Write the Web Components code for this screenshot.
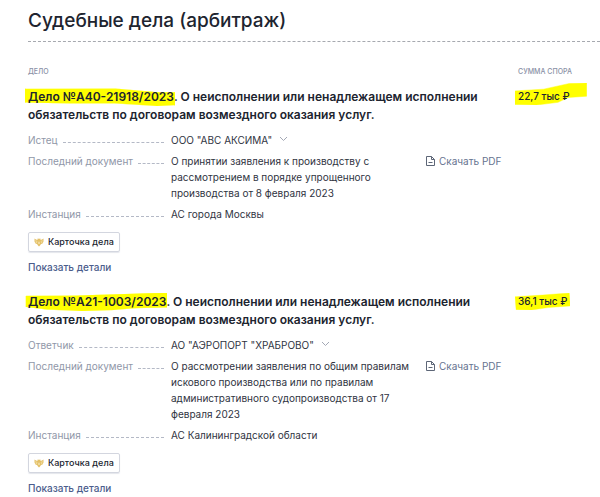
<!DOCTYPE html>
<html lang="ru">
<head>
<meta charset="utf-8">
<title>Судебные дела (арбитраж)</title>
<style>
  body {
    margin: 0;
    padding: 9px 0 0 28px;
    background: #fff;
    color: #20242f;
    font: 10px/16px Inter, 'Liberation Sans', sans-serif;
  }
</style>
</head>
<body>
<court-cases></court-cases>

<script>
const cases = [
  {
    number: 'Дело №А40-21918/2023',
    subject: '. О неисполнении или ненадлежащем исполнении обязательств по договорам возмездного оказания услуг.',
    role: 'Истец',
    party: 'ООО "АВС АКСИМА"',
    document: 'О принятии заявления к производству с рассмотрением в порядке упрощенного производства от 8 февраля 2023',
    court: 'АС города Москвы',
    amount: '22,7 тыс ₽',
    numberMark: '0,4 60,3 78,16 88,24 100,24 100,96 88,100 60,85 30,86 0,80',
    amountMark: '0,36 40,28 76,2 100,0 100,60 74,66 60,88 30,100 0,98',
  },
  {
    number: 'Дело №А21-1003/2023',
    subject: '. О неисполнении или ненадлежащем исполнении обязательств по договорам возмездного оказания услуг.',
    role: 'Ответчик',
    party: 'АО "АЭРОПОРТ "ХРАБРОВО"',
    document: 'О рассмотрении заявления по общим правилам искового производства или по правилам административного судопроизводства от 17 февраля 2023',
    court: 'АС Калининградской области',
    amount: '36,1 тыс ₽',
    numberMark: '1,16 36,14 70,6 100,0 100,80 78,84 60,96 40,100 16,92 1,78',
    amountMark: '0,22 50,12 98,0 100,76 60,86 30,100 2,98',
  },
];

class MarkerText extends HTMLElement {
  constructor() {
    super();
    this.attachShadow({ mode: 'open' });
  }

  connectedCallback() {
    this.shadowRoot.innerHTML = `
      <style>
        :host {
          display: inline-block;
          position: relative;
          isolation: isolate;
          white-space: nowrap;
        }
        svg {
          position: absolute;
          z-index: -1;
          top: var(--marker-top, 0);
          left: -3px;
          width: calc(100% + var(--marker-extra, 4px));
          height: var(--marker-height, 18px);
          fill: #ff0;
        }
      </style>
      <svg viewBox="0 0 100 100" preserveAspectRatio="none" aria-hidden="true">
        <polygon points="${this.getAttribute('shape')}" stroke="#ff0" stroke-width="1" stroke-linejoin="round"/>
      </svg>
      <slot></slot>
    `;
  }
}

class CaseField extends HTMLElement {
  constructor() {
    super();
    this.attachShadow({ mode: 'open' });
  }

  connectedCallback() {
    this.shadowRoot.innerHTML = `
      <style>
        :host {
          display: flex;
          gap: 7px;
        }
        .label {
          display: flex;
          flex: 0 0 136px;
          height: 16px;
          gap: 5px;
          color: #9097a8;
        }
        .label::after {
          content: '';
          flex: 1;
          height: 10px;
          border-bottom: 1px dashed #b4b9c6;
        }
        .value {
          flex: 0 1 240px;
          color: #30343f;
        }
      </style>
      <div class="label"><span>${this.getAttribute('label')}</span></div>
      <div class="value"><slot></slot></div>
      <slot name="action"></slot>
    `;
  }
}

class PdfLink extends HTMLElement {
  constructor() {
    super();
    this.attachShadow({ mode: 'open' });
  }

  connectedCallback() {
    this.shadowRoot.innerHTML = `
      <style>
        :host {
          display: block;
          margin-left: 8px;
          white-space: nowrap;
        }
        a {
          display: flex;
          align-items: center;
          gap: 4px;
          color: #66738f;
          text-decoration: none;
        }
      </style>
      <a href="#pdf">
        <svg width="9" height="10" viewBox="0 0 9 10" fill="none" stroke="#5d6677" stroke-linejoin="round" aria-hidden="true">
          <path d="M.5.5h5l3 3v6h-8zM5.500.5v3h3M2.500 6.500h4"/>
        </svg>
        Скачать PDF
      </a>
    `;
  }
}

class CourtCase extends HTMLElement {
  constructor() {
    super();
    this.attachShadow({ mode: 'open' });
  }

  connectedCallback() {
    const item = this.item;
    this.shadowRoot.innerHTML = `
      <style>
        :host {
          display: block;
        }
        h2 {
          margin: 0 0 8px;
          max-width: 460px;
          font-size: 12px;
          line-height: 18px;
          font-weight: 600;
        }
        .fields {
          display: grid;
          gap: 5px;
        }
        button {
          border: 0;
          padding: 0;
          background: none;
          color: inherit;
          font: inherit;
          cursor: pointer;
        }
        .more {
          margin-left: 4px;
        }
        .more svg {
          vertical-align: 2px;
        }
        .actions {
          display: flex;
          flex-direction: column;
          align-items: flex-start;
          gap: 7px;
          margin-top: 10px;
        }
        .card {
          display: flex;
          align-items: center;
          gap: 4px;
          height: 20px;
          padding: 0 5px;
          border: 1px solid #d3d6df;
          border-radius: 2px;
          box-shadow: 0 1px 1px #e4e6ec;
          font-size: 9px;
          font-weight: 500;
        }
        .details {
          color: #4b5d8c;
          font-weight: 500;
        }
      </style>
      <h2><marker-text shape="${item.numberMark}">${item.number}</marker-text>${item.subject}</h2>
      <div class="fields">
        <case-field label="${item.role}">${item.party}
          <button class="more" type="button" aria-label="Подробнее">
            <svg width="9" height="6" viewBox="0 0 9 6" fill="none" stroke="#a3a8b5" aria-hidden="true">
              <path d="M1 1l3.500 3.500L8 1"/>
            </svg>
          </button>
        </case-field>
        <case-field label="Последний документ">${item.document}<pdf-link slot="action"></pdf-link></case-field>
        <case-field label="Инстанция">${item.court}</case-field>
      </div>
      <div class="actions">
        <button class="card" type="button">
          <svg width="10" height="10" viewBox="0 0 20 20" fill="#e3c067" aria-hidden="true">
            <path d="M1 3l3 2 3 1V3l2 1 1-2 1 2 2-1v3l3-1 3-2v6l-2 4-3 1-2 3-2 2-2-2-2-3-3-1-2-4z"/>
            <path d="M3 7l3 2M3 10l3 1M17 7l-3 2M17 10l-3 1M8 9l2 5 2-5" fill="none" stroke="#fff6d8" stroke-width="1"/>
          </svg>
          Карточка дела
        </button>
        <button class="details" type="button">Показать детали</button>
      </div>
    `;
  }
}

class CourtCases extends HTMLElement {
  constructor() {
    super();
    this.attachShadow({ mode: 'open' });
  }

  connectedCallback() {
    this.shadowRoot.innerHTML = `
      <style>
        :host {
          display: block;
        }
        h1 {
          margin: 0;
          padding-bottom: 8px;
          border-bottom: 1px dashed #a6a9af;
          font-size: 19px;
          line-height: 24px;
          font-weight: 500;
        }
        table {
          width: 100%;
          margin-top: 25px;
          border-collapse: collapse;
        }
        th, td {
          padding: 0;
          text-align: left;
          vertical-align: top;
        }
        th {
          height: 21px;
          color: #8990a5;
          font-size: 7px;
          line-height: 10px;
          font-weight: 500;
          text-transform: uppercase;
        }
        th:last-child {
          width: 82px;
        }
        td {
          padding-bottom: 18px;
        }
        .amount {
          --marker-top: -5px;
          --marker-height: 22px;
          --marker-extra: 20px;
          font-weight: 500;
        }
        tr:last-child .amount {
          --marker-top: 0;
          --marker-height: 17px;
          --marker-extra: 6px;
        }
      </style>
      <h1>Судебные дела (арбитраж)</h1>
      <table>
        <thead><tr><th>Дело</th><th>Сумма спора</th></tr></thead>
        <tbody></tbody>
      </table>
    `;
    this.$body = this.shadowRoot.querySelector('tbody');
    cases.forEach((item) => this._addRow(item));
  }

  _addRow(item) {
    const row = this.$body.insertRow();
    const courtCase = document.createElement('court-case');
    courtCase.item = item;
    row.insertCell().appendChild(courtCase);
    const amount = row.insertCell();
    amount.className = 'amount';
    amount.innerHTML = `<marker-text shape="${item.amountMark}">${item.amount}</marker-text>`;
  }
}

window.customElements.define('marker-text', MarkerText);
window.customElements.define('case-field', CaseField);
window.customElements.define('pdf-link', PdfLink);
window.customElements.define('court-case', CourtCase);
window.customElements.define('court-cases', CourtCases);
</script>
</body>
</html>
